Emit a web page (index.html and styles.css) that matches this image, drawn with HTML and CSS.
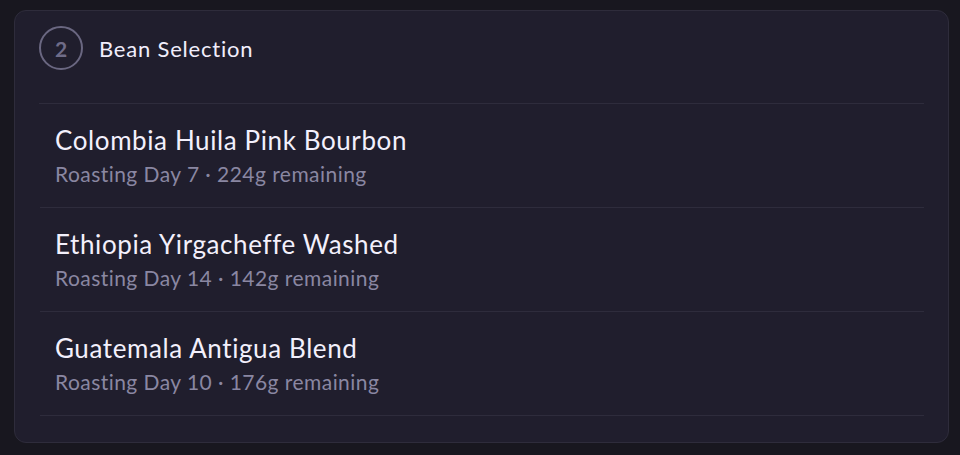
FILE: index.html
```html
<!DOCTYPE html>
<html>
<head>
<meta charset="utf-8">
<link rel="stylesheet" href="styles.css">
</head>
<body>
<section class="card">
  <header class="card-head">
    <span class="step">2</span>
    <h2 class="title">Bean Selection</h2>
  </header>
  <ul class="beans">
    <li class="bean">
      <div class="bean-name">Colombia Huila Pink Bourbon</div>
      <div class="bean-meta">Roasting Day 7 · 224g remaining</div>
    </li>
    <li class="bean">
      <div class="bean-name">Ethiopia Yirgacheffe Washed</div>
      <div class="bean-meta">Roasting Day 14 · 142g remaining</div>
    </li>
    <li class="bean">
      <div class="bean-name">Guatemala Antigua Blend</div>
      <div class="bean-meta">Roasting Day 10 · 176g remaining</div>
    </li>
  </ul>
</section>
</body>
</html>
```
FILE: styles.css
```css
html, body {
  margin: 0;
  padding: 0;
  background: #18171f;
}
body {
  padding: 10px 11px 12px 14px;
  font-family: "Lato", "Noto Sans", sans-serif;
}
.card {
  background: #201e2d;
  border: 1px solid #2e2c3b;
  border-radius: 12px;
  padding: 15px 24px 26px 25px;
  height: 433px;
  box-sizing: border-box;
}
.card-head {
  display: flex;
  align-items: center;
  gap: 16px;
  height: 44px;
  margin-left: -1px;
  padding-bottom: 33px;
  border-bottom: 1px solid #2e2c3c;
}
.step {
  width: 40px;
  height: 40px;
  border: 2px solid #6a6781;
  border-radius: 50%;
  display: flex;
  align-items: center;
  justify-content: center;
  color: #6f6c88;
  font-size: 21px;
  font-weight: 700;
}
.title {
  margin: 0;
  font-size: 22px;
  font-weight: 400;
  letter-spacing: 0.8px;
  color: #f1eefc;
}
.beans {
  list-style: none;
  margin: 0;
  padding: 0;
}
.bean {
  height: 104px;
  box-sizing: border-box;
  border-bottom: 1px solid #2e2c3c;
  padding: 21px 15px 0;
}
.bean-name {
  font-size: 26px;
  line-height: 30px;
  letter-spacing: 0.6px;
  color: #f3f0fc;
}
.bean-meta {
  font-size: 21px;
  line-height: 26px;
  letter-spacing: 0.45px;
  color: #8a87a2;
  margin-top: 6px;
}
```
